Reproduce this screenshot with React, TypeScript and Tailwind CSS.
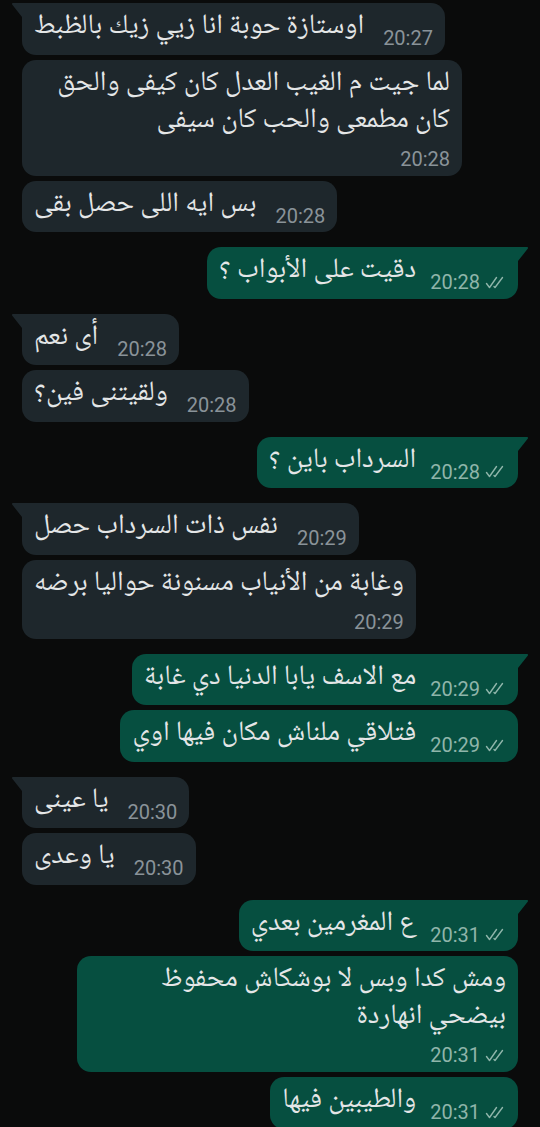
import type { ReactNode } from 'react';

type Msg = {
  text: string[];
  time: string;
  out?: boolean;
  tail?: boolean;
  wrap?: boolean;
  width?: string;
};

const messages: Msg[] = [
  { text: ['اوستازة حوبة انا زيي زيك بالظبط'], time: '20:27', tail: true },
  { text: ['لما جيت م الغيب العدل كان كيفى والحق', 'كان مطمعى والحب كان سيفى'], time: '20:28', wrap: true, width: 'w-[440px]' },
  { text: ['بس ايه اللى حصل بقى'], time: '20:28' },
  { text: ['دقيت على الأبواب ؟'], time: '20:28', out: true, tail: true },
  { text: ['أى نعم'], time: '20:28', tail: true },
  { text: ['ولقيتنى فين؟'], time: '20:28' },
  { text: ['السرداب باين ؟'], time: '20:28', out: true, tail: true },
  { text: ['نفس ذات السرداب حصل'], time: '20:29', tail: true },
  { text: ['وغابة من الأنياب مسنونة حواليا برضه'], time: '20:29', wrap: true },
  { text: ['مع الاسف يابا الدنيا دي غابة'], time: '20:29', out: true, tail: true },
  { text: ['فتلاقي ملناش مكان فيها اوي'], time: '20:29', out: true },
  { text: ['يا عينى'], time: '20:30', tail: true },
  { text: ['يا وعدى'], time: '20:30' },
  { text: ['ع المغرمين بعدي'], time: '20:31', out: true, tail: true },
  { text: ['ومش كدا وبس لا بوشكاش محفوظ', 'بيضحي انهاردة'], time: '20:31', out: true, wrap: true, width: 'w-[441px]' },
  { text: ['والطيبين فيها'], time: '20:31', out: true },
];

// double tick, drawn thin and steep like the dark theme's read mark
function Ticks() {
  return (
    <svg viewBox="0 0 21 13" className="h-[13px] w-[21px]" fill="none" stroke="currentColor" strokeWidth="1.4" strokeLinecap="round" strokeLinejoin="round">
      <path d="M1.5 7.5L4.5 11.5L11.5 1.5" />
      <path d="M9 10.5L10 11.5L17.5 1.5" />
    </svg>
  );
}

function Stamp({ time, out }: { time: string; out?: boolean }) {
  return (
    <span
      className={`flex items-center gap-[5px] whitespace-nowrap font-['Roboto',sans-serif] text-[20px] leading-[24px] ${
        out ? 'text-[#8fb5aa]' : 'text-[#8a9399]'
      }`}
    >
      {time}
      {out && <Ticks />}
    </span>
  );
}

function Tail({ out }: { out?: boolean }) {
  return out ? (
    <svg viewBox="0 0 10 14" className="absolute right-[-10px] top-0 h-[14px] w-[10px] text-[#064f40]">
      <path d="M0 0h9.2c0.8 0 1.2 0.9 0.7 1.5L0 14z" fill="currentColor" />
    </svg>
  ) : (
    <svg viewBox="0 0 10 14" className="absolute left-[-10px] top-0 h-[14px] w-[10px] text-[#1e272c]">
      <path d="M10 0H0.8C0 0 -0.4 0.9 0.1 1.5L10 14z" fill="currentColor" />
    </svg>
  );
}

function Bubble({ m }: { m: Msg }) {
  const corner = m.tail ? (m.out ? 'rounded-tr-none' : 'rounded-tl-none') : '';
  const body: ReactNode = (
    <div dir="rtl" className="whitespace-nowrap text-[28px] leading-[37px] text-[#e4e6e7]">
      {m.text.map((line) => (
        <div key={line}>{line}</div>
      ))}
    </div>
  );
  return (
    <div
      className={`relative rounded-[14px] px-3 pt-[6px] ${m.width ?? ''} ${m.wrap ? 'pb-[5px]' : 'pb-[8.5px]'} ${corner} ${
        m.out ? 'bg-[#064f40]' : 'bg-[#1e272c]'
      }`}
    >
      {m.tail && <Tail out={m.out} />}
      {m.wrap ? (
        <div className="flex flex-col">
          {body}
          <div className="mt-[7px] flex justify-end">
            <Stamp time={m.time} out={m.out} />
          </div>
        </div>
      ) : (
        <div className={`flex items-end ${m.out ? 'gap-[14px]' : 'gap-[19px]'}`}>
          {body}
          <div className="mb-[-4px]">
            <Stamp time={m.time} out={m.out} />
          </div>
        </div>
      )}
    </div>
  );
}

export default function App() {
  return (
    <div className="h-[1127px] overflow-hidden bg-[#0a0b0b] px-[22px] pt-[3px] font-['Noto_Naskh_Arabic','Noto_Sans_Arabic','DejaVu_Sans',sans-serif]">
      <div className="flex flex-col">
        {messages.map((m, i) => {
          const prev = messages[i - 1];
          const newGroup = i > 0 && (m.tail || prev.out !== m.out);
          return (
            <div
              key={i}
              className={`flex ${m.out ? 'justify-end' : 'justify-start'} ${i === 0 ? '' : newGroup ? 'mt-[15px]' : 'mt-[5px]'}`}
            >
              <Bubble m={m} />
            </div>
          );
        })}
      </div>
    </div>
  );
}
